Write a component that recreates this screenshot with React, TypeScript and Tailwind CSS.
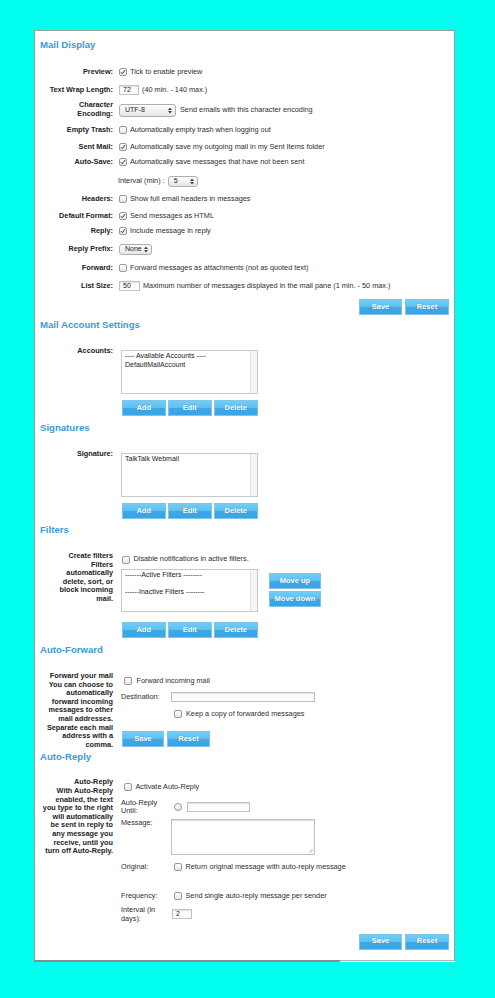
// Mail settings panel — webmail preferences page.
import type { ReactNode } from "react";

const blueBtn =
  "inline-flex h-[16px] items-center justify-center border border-[#80c4ea] bg-[linear-gradient(#72cdf5_0%,#5cc0f1_50%,#3da7e7_50%,#3aa4e5_100%)] text-[7.5px] font-bold text-white [text-shadow:0_0_1px_#2a86c4]";

function Btn({ w, children }: { w: string; children: ReactNode }) {
  return (
    <button type="button" className={`${blueBtn} ${w}`}>
      {children}
    </button>
  );
}

function Check({ checked, round }: { checked?: boolean; round?: boolean }) {
  return (
    <span
      className={`inline-flex h-[8px] w-[8px] shrink-0 items-center justify-center border border-[#9a9a9a] bg-[linear-gradient(#ffffff,#e6e6e6)] ${
        round ? "rounded-full" : "rounded-[2px]"
      }`}
    >
      {checked && (
        <svg viewBox="0 0 8 8" className="h-[6px] w-[6px]">
          <path d="M1.2 4.3 L3.1 6.2 L6.8 1.4" stroke="#2b2b2b" strokeWidth="1.3" fill="none" />
        </svg>
      )}
    </span>
  );
}

function Sel({ w, h, value }: { w: string; h: string; value: string }) {
  return (
    <span
      className={`inline-flex items-center justify-between rounded-[3px] border border-[#aeaeae] bg-[linear-gradient(#fdfdfd,#e6e6e6)] pl-[5px] pr-[3px] text-[7px] text-[#222] ${w} ${h}`}
    >
      {value}
      <svg viewBox="0 0 4 7" className="h-[7px] w-[4px]">
        <path d="M0 3 L2 0.5 L4 3 Z M0 4 L2 6.5 L4 4 Z" fill="#444" />
      </svg>
    </span>
  );
}

function TextIn({ w, value = "" }: { w: string; value?: string }) {
  return (
    <span
      className={`inline-flex h-[10px] items-center border border-[#c2c2c2] bg-[#fcfcfc] pl-[3px] text-[7px] text-[#222] shadow-[inset_0_1px_1px_#e0e0e0] ${w}`}
    >
      {value}
    </span>
  );
}

function ListBox({ h, lines }: { h: string; lines: string[] }) {
  return (
    <div className={`flex w-[137px] border border-[#c9c9c9] bg-white ${h}`}>
      <div className="flex-1 pl-[3px] pt-[1px] text-[7px] leading-[8.6px] text-[#222]">
        {lines.map((l, i) => (
          <div key={i} className="h-[8.6px] whitespace-nowrap">
            {l}
          </div>
        ))}
      </div>
      <div className="w-[7px] border-l border-[#e3e3e3] bg-[#f5f5f5]" />
    </div>
  );
}

function Heading({ mt, children }: { mt: string; children: ReactNode }) {
  return (
    <div className={`h-[12px] text-[9.6px] font-bold leading-[12px] text-[#3a9ad9] ${mt}`}>{children}</div>
  );
}

function Lbl({ lines, className = "" }: { lines: string[]; className?: string }) {
  return (
    <div className={`w-[73px] shrink-0 whitespace-nowrap text-right font-bold leading-[8.6px] text-[#222] ${className}`}>
      {lines.map((l, i) => (
        <div key={i}>{l}</div>
      ))}
    </div>
  );
}

function Row({ mt, label, children }: { mt: string; label: string[]; children: ReactNode }) {
  return (
    <div className={`flex h-[12px] items-center ${mt}`}>
      <Lbl lines={label} />
      <div className="ml-[6px] flex items-center whitespace-nowrap">{children}</div>
    </div>
  );
}

function Triple({ mt }: { mt: string }) {
  return (
    <div className={`ml-[1px] flex gap-[2.5px] ${mt}`}>
      <Btn w="w-[43.5px]">Add</Btn>
      <Btn w="w-[43.5px]">Edit</Btn>
      <Btn w="w-[43.5px]">Delete</Btn>
    </div>
  );
}

function SaveReset({ mt }: { mt: string }) {
  return (
    <div className={`flex justify-end gap-[3px] ${mt}`}>
      <Btn w="w-[43px]">Save</Btn>
      <Btn w="w-[44px]">Reset</Btn>
    </div>
  );
}

export default function App() {
  return (
    <div className="min-h-screen bg-[#00ffee] pl-[34px] pt-[30px] font-['Liberation_Sans',Arial,sans-serif] text-[7.3px] leading-[8.6px] text-[#2e2e2e]">
      <div className="w-[421px] border border-b-0 border-[#9c9c9c] bg-white pb-[10px] pl-[5px] pr-[5px] pt-[8px]">
        {/* Mail Display */}
        <Heading mt="mt-0">Mail Display</Heading>
        <Row mt="mt-[15px]" label={["Preview:"]}>
          <Check checked />
          <span className="ml-[3px]">Tick to enable preview</span>
        </Row>
        <Row mt="mt-[6px]" label={["Text Wrap Length:"]}>
          <TextIn w="w-[20px]" value="72" />
          <span className="ml-[3px]">(40 min. - 140 max.)</span>
        </Row>
        <Row mt="mt-[8px]" label={["Character", "Encoding:"]}>
          <Sel w="w-[57px]" h="h-[13px]" value="UTF-8" />
          <span className="ml-[4px]">Send emails with this character encoding</span>
        </Row>
        <Row mt="mt-[8px]" label={["Empty Trash:"]}>
          <Check />
          <span className="ml-[3px]">Automatically empty trash when logging out</span>
        </Row>
        <Row mt="mt-[5px]" label={["Sent Mail:"]}>
          <Check checked />
          <span className="ml-[3px]">Automatically save my outgoing mail in my Sent Items folder</span>
        </Row>
        <Row mt="mt-[3px]" label={["Auto-Save:"]}>
          <Check checked />
          <span className="ml-[3px]">Automatically save messages that have not been sent</span>
        </Row>
        <Row mt="mt-[7px]" label={[""]}>
          <span className="-ml-[1px]">Interval (min) :</span>
          <span className="ml-[3px] flex">
            <Sel w="w-[30px]" h="h-[11px]" value="5" />
          </span>
        </Row>
        <Row mt="mt-[6px]" label={["Headers:"]}>
          <Check />
          <span className="ml-[3px]">Show full email headers in messages</span>
        </Row>
        <Row mt="mt-[5px]" label={["Default Format:"]}>
          <Check checked />
          <span className="ml-[3px]">Send messages as HTML</span>
        </Row>
        <Row mt="mt-[3px]" label={["Reply:"]}>
          <Check checked />
          <span className="ml-[3px]">Include message in reply</span>
        </Row>
        <Row mt="mt-[6px]" label={["Reply Prefix:"]}>
          <Sel w="w-[33px]" h="h-[11px]" value="None" />
        </Row>
        <Row mt="mt-[7px]" label={["Forward:"]}>
          <Check />
          <span className="ml-[3px]">Forward messages as attachments (not as quoted text)</span>
        </Row>
        <Row mt="mt-[6px]" label={["List Size:"]}>
          <TextIn w="w-[21px]" value="50" />
          <span className="ml-[3px]">Maximum number of messages displayed in the mail pane (1 min. - 50 max.)</span>
        </Row>
        <SaveReset mt="mt-[7px]" />

        {/* Mail Account Settings */}
        <Heading mt="mt-[4px]">Mail Account Settings</Heading>
        <div className="mt-[19px] flex items-start">
          <Lbl lines={["Accounts:"]} className="-mt-[3px]" />
          <div className="ml-[8px]">
            <ListBox h="h-[44px]" lines={["---- Available Accounts ----", "DefaultMailAccount"]} />
            <Triple mt="mt-[6px]" />
          </div>
        </div>

        {/* Signatures */}
        <Heading mt="mt-[6px]">Signatures</Heading>
        <div className="mt-[19px] flex items-start">
          <Lbl lines={["Signature:"]} className="-mt-[3px]" />
          <div className="ml-[8px]">
            <ListBox h="h-[44px]" lines={["TalkTalk Webmail"]} />
            <Triple mt="mt-[6px]" />
          </div>
        </div>

        {/* Filters */}
        <Heading mt="mt-[5px]">Filters</Heading>
        <div className="mt-[16px] flex items-start">
          <Lbl lines={["Create filters", "Filters", "automatically", "delete, sort, or", "block incoming", "mail."]} />
          <div className="ml-[8px]">
            <div className="flex h-[15px] items-center whitespace-nowrap">
              <span className="ml-[1px] flex">
                <Check />
              </span>
              <span className="ml-[3.5px]">Disable notifications in active filters.</span>
            </div>
            <div className="mt-[2px] flex items-start">
              <ListBox h="h-[43px]" lines={["-------Active Filters --------", "", "------Inactive Filters --------"]} />
              <div className="ml-[11px] mt-[4px] flex flex-col gap-[2px]">
                <Btn w="w-[52px]">Move up</Btn>
                <Btn w="w-[52px]">Move down</Btn>
              </div>
            </div>
            <Triple mt="mt-[10px]" />
          </div>
        </div>

        {/* Auto-Forward */}
        <Heading mt="mt-[6px]">Auto-Forward</Heading>
        <div className="mt-[16px] flex items-start">
          <Lbl
            lines={[
              "Forward your mail",
              "You can choose to",
              "automatically",
              "forward incoming",
              "messages to other",
              "mail addresses.",
              "Separate each mail",
              "address with a",
              "comma.",
            ]}
          />
          <div className="ml-[8px] whitespace-nowrap">
            <div className="flex h-[18px] items-center">
              <span className="ml-[3px] flex">
                <Check />
              </span>
              <span className="ml-[4.5px]">Forward incoming mail</span>
            </div>
            <div className="flex h-[14px] items-center">
              <span className="w-[50px]">Destination:</span>
              <TextIn w="w-[144px]" />
            </div>
            <div className="flex h-[20px] items-center">
              <span className="ml-[53px] flex">
                <Check />
              </span>
              <span className="ml-[4px]">Keep a copy of forwarded messages</span>
            </div>
            <div className="ml-[1px] mt-[7px] flex gap-[3px]">
              <Btn w="w-[42px]">Save</Btn>
              <Btn w="w-[43px]">Reset</Btn>
            </div>
          </div>
        </div>

        {/* Auto-Reply */}
        <Heading mt="mt-[2px]">Auto-Reply</Heading>
        <div className="mt-[15px] flex items-start">
          <Lbl
            lines={[
              "Auto-Reply",
              "With Auto-Reply",
              "enabled, the text",
              "you type to the right",
              "will automatically",
              "be sent in reply to",
              "any message you",
              "receive, until you",
              "turn off Auto-Reply.",
            ]}
          />
          <div className="ml-[8px] whitespace-nowrap">
            <div className="flex h-[18px] items-center">
              <span className="ml-[3px] flex">
                <Check />
              </span>
              <span className="ml-[3.5px]">Activate Auto-Reply</span>
            </div>
            <div className="flex h-[21px] items-center">
              <span className="w-[50px] leading-[8px]">
                Auto-Reply
                <br />
                Until:
              </span>
              <span className="ml-[3px] flex">
                <Check round />
              </span>
              <span className="ml-[5px] flex">
                <TextIn w="w-[63px]" />
              </span>
            </div>
            <div className="mt-[2px] flex items-start">
              <span className="w-[50px]">Message:</span>
              <div className="relative h-[36px] w-[144px] border border-[#c2c2c2] bg-white shadow-[inset_0_1px_1px_#e0e0e0]">
                <svg viewBox="0 0 6 6" className="absolute bottom-[1px] right-[1px] h-[5px] w-[5px]">
                  <path d="M1 5.5 L5.5 1 M3 5.5 L5.5 3" stroke="#8a8a8a" strokeWidth="0.7" />
                </svg>
              </div>
            </div>
            <div className="flex h-[24px] items-center">
              <span className="w-[50px]">Original:</span>
              <span className="ml-[3px] flex">
                <Check />
              </span>
              <span className="ml-[3.5px]">Return original message with auto-reply message</span>
            </div>
            <div className="mt-[11px] flex h-[12px] items-center">
              <span className="w-[50px]">Frequency:</span>
              <span className="ml-[3px] flex">
                <Check />
              </span>
              <span className="ml-[3.5px]">Send single auto-reply message per sender</span>
            </div>
            <div className="mt-[4px] flex items-start">
              <span className="w-[50px] leading-[8.6px]">
                Interval (in
                <br />
                days):
              </span>
              <span className="ml-[1px] mt-[3px] flex">
                <TextIn w="w-[20px]" value="2" />
              </span>
            </div>
          </div>
        </div>
        <SaveReset mt="mt-[10px]" />
      </div>
      <div className="flex w-[421px]">
        <div className="h-[2px] w-[306px] bg-[#8c8c8c]" />
        <div className="h-[2px] flex-1 border-t border-[#b5b5b5] bg-[#ededed]" />
      </div>
    </div>
  );
}
